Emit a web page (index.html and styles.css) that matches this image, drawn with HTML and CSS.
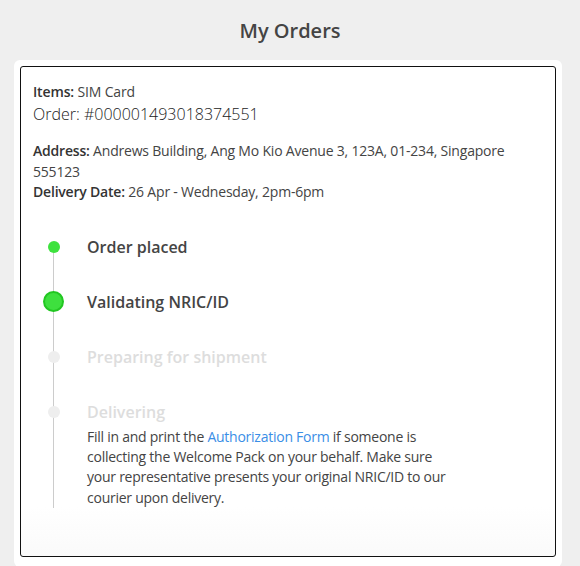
FILE: index.html
```
<!DOCTYPE html>
<html>
<head>
<meta charset="utf-8">
<link rel="stylesheet" href="styles.css">
</head>
<body>
<h1 class="title">My Orders</h1>
<div class="card">
  <div class="order">
    <p class="items"><b>Items:</b> SIM Card</p>
    <p class="order-no">Order: #000001493018374551</p>
    <div class="details">
      <p><b>Address:</b> Andrews Building, Ang Mo Kio Avenue 3, 123A, 01-234, Singapore 555123</p>
      <p><b>Delivery Date:</b> 26 Apr - Wednesday, 2pm-6pm</p>
    </div>
    <ul class="timeline">
      <li class="step done"><span class="dot"></span><span class="label">Order placed</span></li>
      <li class="step current"><span class="dot"></span><span class="label">Validating NRIC/ID</span></li>
      <li class="step pending"><span class="dot"></span><span class="label">Preparing for shipment</span></li>
      <li class="step pending last"><span class="dot"></span><span class="label">Delivering</span>
        <p class="desc">Fill in and print the <a href="#">Authorization Form</a> if someone is collecting the Welcome Pack on your behalf. Make sure your representative presents your original NRIC/ID to our courier upon delivery.</p>
      </li>
    </ul>
  </div>
</div>
</body>
</html>
```
FILE: styles.css
```
html, body {
  margin: 0;
  padding: 0;
  background: #efefef;
  font-family: "Open Sans", "Noto Sans", sans-serif;
  color: #444;
}
.title {
  margin: 17px 0 15px;
  font-size: 20px;
  line-height: 28px;
  font-weight: 600;
  text-align: center;
  color: #444;
}
.card {
  margin-left: 14px;
  width: 536px;
  background: #fff;
  border-radius: 6px;
  padding: 6px 6px 10px;
}
.order {
  border: 1px solid #111;
  border-radius: 3px;
  padding: 15px 12px 48px;
  background: linear-gradient(to bottom, #fff 90%, #fafafa 100%);
}
.order p { margin: 0; }
.items {
  font-size: 14px;
  line-height: 20px;
  letter-spacing: -0.15px;
}
.items b, .details b { font-weight: 600; color: #333; }
.order-no {
  font-size: 16px;
  line-height: 24px;
  font-weight: 300;
  color: #222;
}
.details {
  margin-top: 15px;
  font-size: 14px;
  line-height: 20.5px;
  letter-spacing: -0.2px;
}
.timeline {
  list-style: none;
  margin: 33px 0 0;
  padding: 0;
  position: relative;
}
.step {
  position: relative;
  padding-left: 54px;
  height: 55px;
}
.step.last { height: auto; }
.step::before {
  content: "";
  position: absolute;
  left: 20px;
  top: 11px;
  bottom: -11px;
  width: 1px;
  background: #ccc;
}
.step.last::before { bottom: 0; }
.label {
  display: block;
  font-size: 16px;
  line-height: 22px;
  font-weight: 600;
  color: #444;
}
.pending .label { color: #ddd; }
.dot {
  position: absolute;
  left: 15px;
  top: 5px;
  width: 12px;
  height: 12px;
  border-radius: 50%;
  background: #eee;
  z-index: 1;
}
.done .dot { background: #3ee23e; }
.current .dot {
  left: 10px;
  top: 0px;
  width: 17px;
  height: 17px;
  background: #3ee03e;
  border: 2px solid #22c722;
}
.desc {
  margin-top: 4px !important;
  width: 366px;
  font-size: 14px;
  line-height: 20.4px;
  letter-spacing: -0.25px;
  color: #444;
}
.desc a {
  color: #3a8ee6;
  text-decoration: none;
}
```
